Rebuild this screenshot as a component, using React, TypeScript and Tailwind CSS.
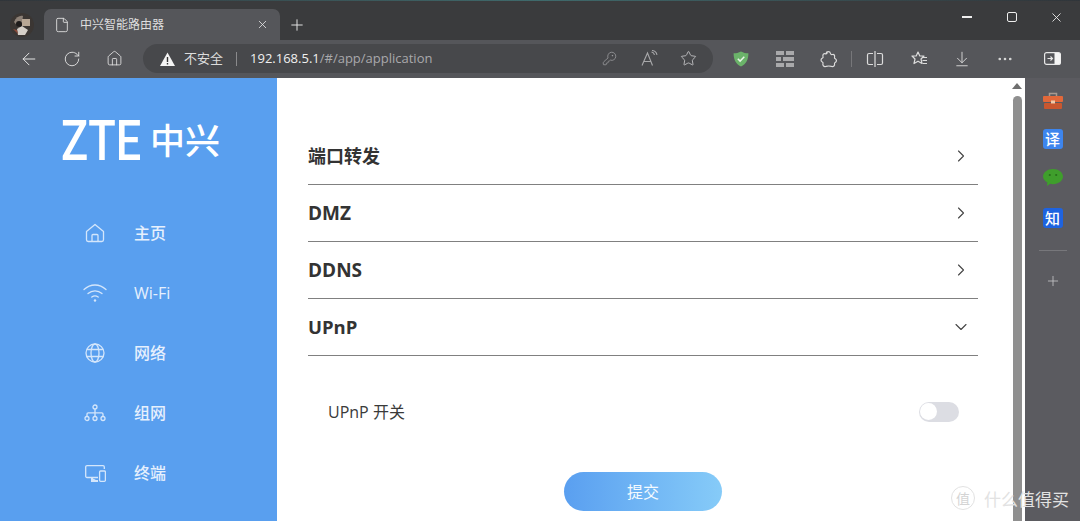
import { ArrowDownToLine, ArrowLeft, ChevronDown, ChevronRight, File, House, KeyRound, MoreHorizontal, Plus, RotateCw, Star, X } from "lucide-react";
import type { ReactNode } from "react";

const cjk = "font-['Open_Sans','Noto_Sans_CJK_SC',sans-serif]";

function Avatar() {
  return (
    <svg width="26" height="26" viewBox="0 0 26 26" className="shrink-0">
      <circle cx="13" cy="13" r="12" fill="#3b3633" />
      <path d="M5 10c2-5 6-7 9-6l-1 7-3 5z" fill="#8d8177" />
      <rect x="13" y="7" width="8" height="7" fill="#b8a795" />
      <path d="M8 17l5-3 6 4-3 5H9z" fill="#d5cfc8" />
      <circle cx="10" cy="12" r="3" fill="#1e1b1a" />
      <path d="M4 17l4 1 1 4z" fill="#8a4a3a" />
    </svg>
  );
}

function Shield() {
  return (
    <svg width="18" height="18" viewBox="0 0 18 18">
      <path d="M9 1.5c2.5 1.3 4.8 1.8 7.4 1.8 0 6.3-2 10.6-7.4 13.2C3.600 13.900 1.600 9.600 1.600 3.300 4.200 3.300 6.500 2.800 9 1.500z" fill="#6bb36a" />
      <path d="M5.800 8.800l2.300 2.300 4.200-4.300" fill="none" stroke="#e8f5e8" strokeWidth="1.500" />
    </svg>
  );
}

function GridIcon() {
  return (
    <svg width="18" height="16" viewBox="0 0 18 16" fill="#a9a9ab">
      <rect x="0" y="0" width="8" height="4" />
      <rect x="10" y="0" width="8" height="4" />
      <rect x="0" y="6" width="5" height="4" />
      <rect x="7" y="6" width="11" height="4" />
      <rect x="0" y="12" width="8" height="4" />
      <rect x="10" y="12" width="8" height="4" />
    </svg>
  );
}

function PuzzleIcon() {
  return (
    <svg width="18" height="18" viewBox="0 0 18 18" fill="none" stroke="#dcdcdc" strokeWidth="1.200">
      <path d="M6 3.500c.5-2.500 4-2.500 4.500 0 .2 1 1 1.200 2 1 1.800-.3 2.500 1 2 2.800-.2.800.1 1.100.8 1.400 1.500.8 1.500 3 0 3.800-.7.300-1 .7-.8 1.400.5 2-1 3-3 2.500-2-.6-3.500-.6-5.500 0-2.300.6-3.600-1-3-3 .3-1-.2-1.300-1-1.700-1.400-.8-1.200-2.800.2-3.400 1-.4 1.200-1 .8-2-.6-1.800.8-3 2.400-2.500.8.200 1.400 0 1.600-.8z" />
    </svg>
  );
}

function SplitIcon() {
  return (
    <svg width="18" height="18" viewBox="0 0 18 18" fill="none" stroke="#dcdcdc" strokeWidth="1.200">
      <path d="M9 1v16M7 3.500H3a1.500 1.500 0 0 0-1.500 1.500v8A1.500 1.500 0 0 0 3 14.500h4M11 3.500h4A1.500 1.500 0 0 1 16.500 5v8a1.500 1.500 0 0 1-1.500 1.500h-4" />
    </svg>
  );
}

function FavoritesIcon() {
  return (
    <svg width="18" height="18" viewBox="0 0 18 18" fill="none" stroke="#dcdcdc" strokeWidth="1.200">
      <path d="M7 2l1.800 4H13l-3 3 1 4.500-4-2.300-4 2.300 1-4.500-3-3h4.200z" strokeLinejoin="round" />
      <path d="M12 7.500h4M11.500 10.500h4.500M11.500 13.500h4.500" />
    </svg>
  );
}

function PanelIcon() {
  return (
    <svg width="17" height="13" viewBox="0 0 17 13">
      <rect x=".6" y=".6" width="15.800" height="11.800" rx="2" fill="none" stroke="#e8e8e8" strokeWidth="1.200" />
      <path d="M10.500 1h4.500a1.500 1.500 0 0 1 1.500 1.500v8a1.500 1.500 0 0 1-1.500 1.500h-4.500z" fill="#f5f5f5" />
      <path d="M3.500 6.500h5M6.500 4.500l2 2-2 2" fill="none" stroke="#e8e8e8" strokeWidth="1.100" />
    </svg>
  );
}

function SpeakIcon() {
  return (
    <svg width="18" height="17" viewBox="0 0 18 17" fill="none" stroke="#a8a8aa" strokeWidth="1.100">
      <path d="M1 15.500L6.500 3l5 12.500M3 11.500h7" />
      <path d="M10.500 2c1.500.2 2.600 1.200 3 2.800M11 .5c2.500.2 4.400 1.800 5 4.300" />
    </svg>
  );
}

function HomeIcon() {
  return (
    <svg width="20" height="20" viewBox="0 0 20 20" fill="none" stroke="#d4e6fb" strokeWidth="1.300">
      <path d="M1.500 8.500L10 1.500l8.500 7v8.300a1.700 1.700 0 0 1-1.700 1.700H3.200a1.700 1.700 0 0 1-1.700-1.700z" strokeLinejoin="round" />
      <path d="M7 18.500v-6a1 1 0 0 1 1-1h4a1 1 0 0 1 1 1v6" />
    </svg>
  );
}

function WifiIcon() {
  return (
    <svg width="24" height="19" viewBox="0 0 24 19" fill="none" stroke="#d4e6fb" strokeWidth="1.300" strokeLinecap="round">
      <path d="M1 6.500C7.500 .5 16.500 .5 23 6.500" />
      <path d="M5 10.500c4-3.600 10-3.600 14 0" />
      <path d="M8.800 14c2-1.500 4.400-1.500 6.400 0" />
      <circle cx="12" cy="17.500" r="1.200" fill="#d4e6fb" stroke="none" />
    </svg>
  );
}

function GlobeIcon() {
  return (
    <svg width="20" height="20" viewBox="0 0 20 20" fill="none" stroke="#d4e6fb" strokeWidth="1.300">
      <circle cx="10" cy="10" r="9" />
      <ellipse cx="10" cy="10" rx="4" ry="9" />
      <path d="M1.800 6.500h16.400M1.800 13.500h16.400" />
    </svg>
  );
}

function TreeIcon() {
  return (
    <svg width="22" height="18" viewBox="0 0 22 18" fill="none" stroke="#d4e6fb" strokeWidth="1.300">
      <circle cx="11" cy="3" r="2" />
      <circle cx="3" cy="14.500" r="2" />
      <circle cx="11" cy="14.500" r="2" />
      <circle cx="19" cy="14.500" r="2" />
      <path d="M11 5v7.500M3 12.500V10c0-.8.500-1.200 1.200-1.200h13.600c.7 0 1.200.4 1.200 1.200v2.500" />
    </svg>
  );
}

function DevicesIcon() {
  return (
    <svg width="21" height="17" viewBox="0 0 21 17" fill="none" stroke="#d4e6fb" strokeWidth="1.300">
      <path d="M13 12.500H2a1.300 1.300 0 0 1-1.300-1.300V2A1.300 1.300 0 0 1 2 .7h16A1.300 1.300 0 0 1 19.300 2v2" />
      <rect x="14.600" y="6" width="5.800" height="10.300" rx="1" />
      <path d="M7 13v3h6" fill="#d4e6fb" strokeWidth="2" />
    </svg>
  );
}

function NavItem({ icon, label, height }: { icon: ReactNode; label: string; height: string }) {
  return (
    <div className={`flex items-center ${height}`}>
      <div className="flex w-[134px] justify-center pl-[56px]">{icon}</div>
      <span className={`${cjk} text-[16px] font-medium text-[#e6f0fd]`}>{label}</span>
    </div>
  );
}

function AccordionRow({ title, size, open }: { title: string; size: string; open?: boolean }) {
  return (
    <div className="flex h-[57px] items-center justify-between border-b border-[#808080]">
      <span className={`${cjk} ${size} font-bold text-[#333333]`}>{title}</span>
      {open ? (
        <ChevronDown size={20} strokeWidth={1.300} className="mr-[7px] text-[#444444]" />
      ) : (
        <ChevronRight size={20} strokeWidth={1.300} className="mr-[7px] text-[#444444]" />
      )}
    </div>
  );
}

export default function App() {
  return (
    <div className="relative flex h-[521px] w-[1080px] flex-col overflow-hidden bg-[#3a3b3d]">
      <div className="h-px bg-gradient-to-r from-[#30353a] via-[#3f6a6c] to-[#30353a]" />
      {/* title bar */}
      <div className="flex h-[39px] items-end">
        <div className="flex h-[39px] w-[44px] items-center justify-center pt-[9px]">
          <Avatar />
        </div>
        <div className="flex h-[31px] w-[236px] items-center rounded-t-[7px] bg-[#55565a] pl-[10px] pr-[11px]">
          <File size={16} strokeWidth={1.300} className="text-[#e4e4e4]" />
          <span className={`${cjk} ml-[10px] flex-1 text-[12px] text-[#dedede]`}>中兴智能路由器</span>
          <X size={13} strokeWidth={1.500} className="text-[#e8e8e8]" />
        </div>
        <div className="flex h-[31px] w-[34px] items-center justify-center">
          <Plus size={18} strokeWidth={1.300} className="text-[#e4e4e4]" />
        </div>
        <div className="flex h-[31px] flex-1 items-start justify-end">
          <div className="mt-[-1px] mr-[1px] flex w-[135px] items-center">
            <div className="flex h-[18px] w-[45px] items-center justify-center">
              <div className="h-[2px] w-[10px] bg-[#eeeeee]" />
            </div>
            <div className="flex h-[18px] w-[45px] items-center justify-center">
              <div className="h-[10px] w-[10px] rounded-[2px] border border-[#eeeeee]" />
            </div>
            <div className="flex h-[18px] w-[45px] items-center justify-center">
              <X size={15} strokeWidth={1.400} className="text-[#eeeeee]" />
            </div>
          </div>
        </div>
      </div>
      {/* toolbar */}
      <div className="flex h-[38px] items-center bg-[#55565a] pb-[1px]">
        <div className="flex w-[143px] items-center pl-[19px]">
          <ArrowLeft size={20} strokeWidth={1.200} className="text-[#e4e4e4]" />
          <RotateCw size={18} strokeWidth={1.200} className="ml-[24px] text-[#e4e4e4]" />
          <House size={17} strokeWidth={1.200} className="ml-[25px] text-[#e4e4e4]" />
        </div>
        <div className="flex h-[29px] w-[570px] items-center rounded-full bg-[#47484b] pl-[17px] pr-[16px]">
          <svg width="15" height="14" viewBox="0 0 15 14">
            <path d="M7.500 .5L15 14H0z" fill="#f4f4f4" />
            <path d="M6.800 5h1.400v5H6.800zM6.800 11h1.400v1.400H6.800z" fill="#333333" />
          </svg>
          <span className={`${cjk} ml-[9px] text-[13px] text-[#dcdcdc]`}>不安全</span>
          <div className="mx-[13px] h-[14px] w-px bg-[#8a8a8c]" />
          <span className="font-['Open_Sans',sans-serif] text-[13px] text-[#f0f0f0]">
            192.168.5.1<span className="text-[#a9a9ab]">/#/app/application</span>
          </span>
          <div className="flex-1" />
          <KeyRound size={15} strokeWidth={1.100} className="text-[#a8a8aa]" />
          <div className="ml-[24px]"><SpeakIcon /></div>
          <Star size={17} strokeWidth={1.200} className="ml-[21px] text-[#c8c8ca]" />
        </div>
        <div className="flex flex-1 items-center pl-[19px]">
          <Shield />
          <div className="ml-[26px]"><GridIcon /></div>
          <div className="ml-[26px]"><PuzzleIcon /></div>
          <div className="ml-[13px] h-[16px] w-px bg-[#77777a]" />
          <div className="ml-[14px]"><SplitIcon /></div>
          <div className="ml-[27px]"><FavoritesIcon /></div>
          <ArrowDownToLine size={18} strokeWidth={1.200} className="ml-[24px] text-[#dcdcdc]" />
          <MoreHorizontal size={18} strokeWidth={1.500} className="ml-[25px] text-[#dcdcdc]" />
          <div className="ml-[30px]"><PanelIcon /></div>
        </div>
      </div>
      {/* page */}
      <div className="flex min-h-0 flex-1">
        <aside className="flex w-[277px] shrink-0 flex-col bg-[#599fef]">
          <div className="flex h-[125px] items-center pb-[4px] pl-[61px] text-white">
            <span className="w-[85px] origin-left scale-x-[0.82] pt-[6px] font-['Roboto',sans-serif] text-[55px] leading-none font-medium">ZTE</span>
            <span className="ml-[4px] font-['Noto_Sans_CJK_SC',sans-serif] text-[35px] leading-none font-medium">中兴</span>
          </div>
          <NavItem icon={<HomeIcon />} label="主页" height="h-[60px]" />
          <NavItem icon={<WifiIcon />} label="Wi-Fi" height="h-[59px]" />
          <NavItem icon={<GlobeIcon />} label="网络" height="h-[61px]" />
          <NavItem icon={<TreeIcon />} label="组网" height="h-[60px]" />
          <NavItem icon={<DevicesIcon />} label="终端" height="h-[60px]" />
        </aside>
        <main className="flex min-w-0 flex-1 flex-col bg-white pl-[31px] pr-[33px] pt-[50px]">
          <AccordionRow title="端口转发" size="text-[18px]" />
          <AccordionRow title="DMZ" size="text-[19px]" />
          <AccordionRow title="DDNS" size="text-[19px]" />
          <AccordionRow title="UPnP" size="text-[18.500px]" open />
          <div className="flex h-[111px] items-center justify-between pl-[20px] pr-[19px]">
            <span className={`${cjk} text-[16px] text-[#3a3a3a]`}>UPnP 开关</span>
            <div className="flex h-[20px] w-[40px] items-center rounded-full bg-[#dcdde3] pl-[1px]">
              <div className="h-[17px] w-[17px] rounded-full bg-white" />
            </div>
          </div>
          <div className="flex justify-center pt-[5px]">
            <button
              type="button"
              className={`${cjk} h-[39px] w-[158px] rounded-full bg-gradient-to-r from-[#5a9ff0] to-[#86cbf8] text-[16px] text-[#f4faff]`}
            >
              提交
            </button>
          </div>
        </main>
        {/* scrollbar */}
        <div className="flex w-[14px] shrink-0 flex-col items-center bg-white pl-[1px] pr-[3px]">
          <div className="mt-[5px] h-0 w-0 border-x-[5px] border-b-[6px] border-x-transparent border-b-[#6f6f6f]" />
          <div className="mt-[7px] w-[9px] flex-1 rounded-t-full bg-[#8f8f8f]" />
        </div>
        {/* edge sidebar */}
        <div className="flex w-[55px] shrink-0 flex-col items-center bg-[#5b5b60] pt-[14px]">
          <svg width="20" height="17" viewBox="0 0 20 17">
            <path d="M6.500 4V1.500h7V4" fill="none" stroke="#a89a90" strokeWidth="1.500" />
            <rect x="0" y="4" width="20" height="6" rx="1" fill="#e2683a" />
            <rect x="1" y="11" width="18" height="6" rx="1" fill="#c9572f" />
            <rect x="8" y="8.500" width="4" height="3" fill="#f0c9a8" />
          </svg>
          <div className={`${cjk} mt-[20px] flex h-[20px] w-[20px] items-center justify-center rounded-[3px] bg-[#3d85ee] text-[15px] leading-none font-medium text-white`}>译</div>
          <svg width="20" height="18" viewBox="0 0 20 18" className="mt-[20px]">
            <path d="M10 0c5.500 0 10 3.400 10 7.600s-4.500 7.600-10 7.600c-1 0-2-.1-2.900-.4L4 17l.3-3.500C1.700 12.100 0 10 0 7.600 0 3.400 4.500 0 10 0z" fill="#3f9e2c" />
            <circle cx="6.800" cy="6" r="1.100" fill="#2a6d1c" />
            <circle cx="13.200" cy="6" r="1.100" fill="#2a6d1c" />
          </svg>
          <div className={`${cjk} mt-[21px] flex h-[20px] w-[20px] items-center justify-center rounded-[3px] bg-[#1e63e0] text-[15px] leading-none font-medium text-white`}>知</div>
          <div className="mt-[22px] h-px w-[28px] bg-[#77777b]" />
          <Plus size={16} strokeWidth={1.200} className="mt-[22px] text-[#c8c8ca]" />
        </div>
      </div>
      {/* watermark */}
      <div className="absolute bottom-[11px] right-[11px] flex items-center gap-[9px]">
        <div className="flex h-[24px] w-[24px] items-center justify-center rounded-full border border-[#e2e2e2] font-['Noto_Sans_CJK_SC',sans-serif] text-[14px] leading-none text-[#d4d4d4]">值</div>
        <span className="font-['Noto_Sans_CJK_SC',sans-serif] text-[17px] leading-none text-[#e2e2e2]">什么值得买</span>
      </div>
    </div>
  );
}
